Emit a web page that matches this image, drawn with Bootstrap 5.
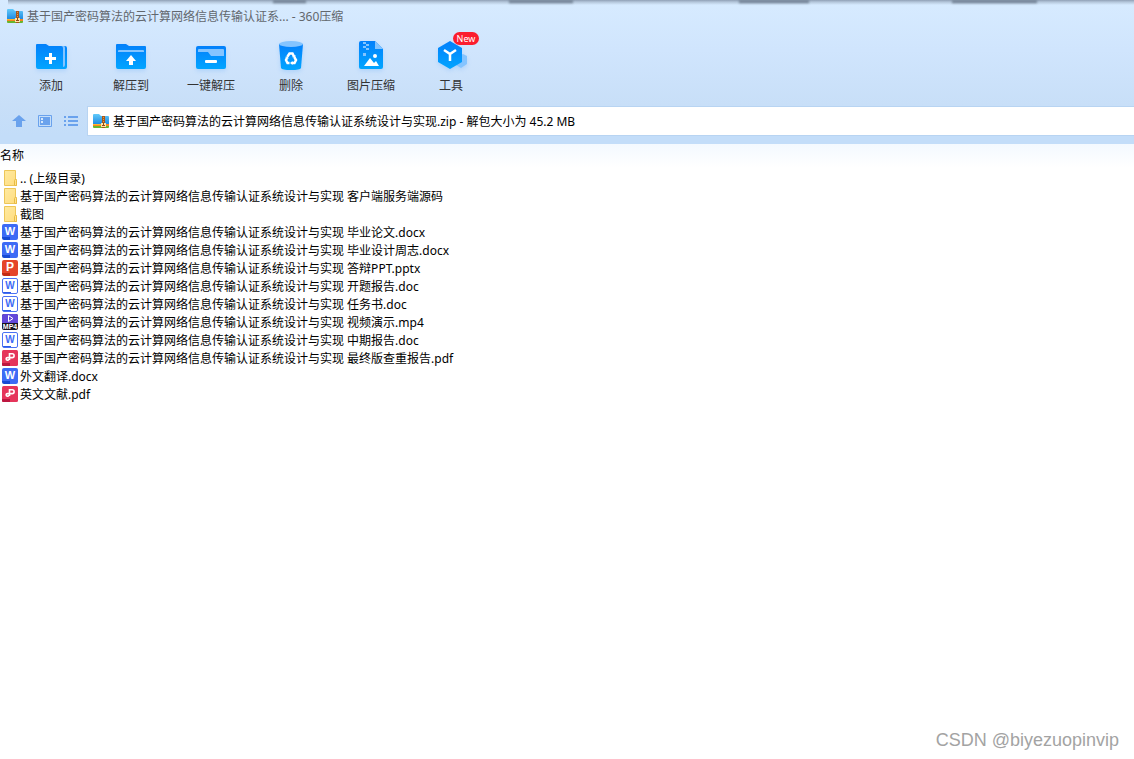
<!DOCTYPE html>
<html lang="zh-CN">
<head>
<meta charset="utf-8">
<meta name="viewport" content="width=device-width, initial-scale=1">
<title>360压缩</title>
<link href="https://cdn.jsdelivr.net/npm/bootstrap@5.3.0/dist/css/bootstrap.min.css" rel="stylesheet">
<style>
  body { font-family: "Noto Sans", "Noto Sans CJK SC", sans-serif; font-size: 12px; line-height: 18px; color: #000; background: #fff; }
  .app-head { background: linear-gradient(#d7ebff 0, #d0e5fd 50px, #c8dff8 104px, #c3ddf9 136px, #c3ddf9 100%); }
  .top-shade { left: 8px; right: 0; top: 0; height: 5px; background: linear-gradient(#8fa0b5, #b4c6da 40%, transparent); }
  .top-shade i { position: absolute; top: 0; height: 4px; background: linear-gradient(#708093 50%, transparent); filter: blur(1px); }
  .title-bar { height: 32px; padding-left: 7px; gap: 4px; color: #62676d; }
  .title-bar span { padding-top: 2px; }
  .tool-bar { padding-left: 11px; height: 74px; }
  .tool { width: 80px; border: 0; background: none; color: #333; padding: 7px 0 0; }
  .tool svg { display: block; margin: 0 auto 2px; filter: drop-shadow(0 2px 2px #3d95f533); }
  .new-tag { left: 42px; top: 0; width: 26px; height: 13px; border-radius: 7px; background: #fb1d2e; color: #fff; font-size: 9px; line-height: 13px; }
  .path-row { padding: 0 0 8px 12px; }
  .mini { border: 0; padding: 0; background: none; width: 14px; height: 14px; }
  .mini svg { display: block; }
  .nav-set { width: 75px; gap: 12px; }
  .path-box { border: 1px solid #b8d4f2; border-right: 0; background: #fff; height: 30px; padding-left: 5px; gap: 4px; }
  .path-box input { border: 0; padding: 0; outline: 0; background: none; color: #000; height: 20px; }
  .list-zone { background: linear-gradient(#f3f9ff, #fff 24px); }
  .files { border-collapse: collapse; width: 100%; }
  .files th { font-weight: 400; height: 26px; padding: 0 0 3px; }
  .files td { padding: 0 0 0 2px; height: 18px; }
  .files a { color: #000; text-decoration: none; gap: 2px; height: 18px; }
  .files a > svg, .ficon { flex: none; width: 16px; height: 16px; margin-bottom: 2px; }
  .ficon { border-radius: 2px; overflow: hidden; color: #fff; text-align: center; font: bold 11px/14px "Liberation Sans", sans-serif; background: linear-gradient(var(--dark), var(--dark)) 0 100% / 8px 3px no-repeat var(--base); }
  .f-docx { --base: #3d6bf5; --dark: #174ad4; }
  .f-pptx { --base: #e5452a; --dark: #c22a13; font-size: 12px; }
  .f-doc { --base: #fff; --dark: #2a5be8; color: #3d6bf5; border: 1px solid #4a72f4; background-size: 8px 1px; font-size: 10px; }
  .f-mp4 { background: #17121f; font-size: 7px; line-height: 7px; }
  .f-mp4 svg { display: block; }
  .wm { right: 15px; bottom: 7px; font: 18px/24px "Liberation Sans", sans-serif; color: #a3a3a3; }
</style>
</head>
<body class="min-vh-100 position-relative">
<svg width="0" height="0" class="position-absolute" aria-hidden="true">
  <defs>
    <linearGradient id="blue" x1="0" y1="0" x2="0" y2="1"><stop offset="0" stop-color="#0380fb"/><stop offset="1" stop-color="#02a5ff"/></linearGradient>
    <linearGradient id="sky" x1="0" y1="0" x2="0" y2="1"><stop offset="0" stop-color="#62cafa"/><stop offset="1" stop-color="#1e8be2"/></linearGradient>
    <linearGradient id="fold" x1="0" y1="0" x2="1" y2="1"><stop offset="0" stop-color="#ffeaa0"/><stop offset="1" stop-color="#ffdc7e"/></linearGradient>
  </defs>
  <symbol id="zip" viewBox="0 0 16 14">
    <path fill="url(#sky)" d="M0 1q0-1 1-1h5l2 2h7q1 0 1 1v7H0z"/>
    <path fill="#f6851f" d="M0 10h16v2H0z"/><path fill="#ffb52d" d="M0 10h8v1H0z"/><path fill="#67b52e" d="M0 12h16v1q0 1-1 1H1q-1 0-1-1z"/>
    <path fill="#a8561a" d="M9 2h3v12H9z"/><path fill="#dd9a4a" d="M10 3h1v1h-1zm0 2h1v1h-1zm0 2h1v1h-1z"/>
    <path fill="#ffe3a6" d="M8 9h5v4H8z"/><path fill="#8d4b16" d="M10 9h1v2h-1zM9 11h3v1H9z"/>
  </symbol>
  <symbol id="dir" viewBox="0 0 16 16">
    <path fill="url(#fold)" stroke="#edc658" d="M2.500.5h11v9h1v6h-12z"/><path fill="#ffe28c" stroke="#e8bb45" d="M12.500 10.500q0-1 1-1t1 1v5h-2z"/>
  </symbol>
  <symbol id="pdf" viewBox="0 0 16 16">
    <rect width="16" height="16" rx="1.500" fill="#e5355b"/><path fill="#bd1740" d="M0 13h8v3H1.500Q0 16 0 14.500z"/>
    <path fill="none" stroke="#fff" stroke-width="1.600" d="M7.500 10V3.800h2.700a1.900 1.900 0 0 1 0 3.800H5.400a1.300 1.300 0 1 0 1.300 1.600"/>
  </symbol>
  <symbol id="play" viewBox="0 0 16 9">
    <path fill="#6247d9" d="M0 0h16v9H0z"/><path fill="none" stroke="#fff" d="M6.500 1.500v6L11 4.500z"/>
  </symbol>
</svg>

<header class="app-head position-relative">
  <div class="top-shade position-absolute" aria-hidden="true">
    <i style="left:23.5%;width:3%"></i><i style="left:44.5%;width:5.7%"></i><i style="left:64.9%;width:6.2%"></i><i style="left:83.800%;width:7.6%"></i>
  </div>
  <div class="title-bar d-flex align-items-center">
    <svg width="16" height="14" aria-hidden="true"><use href="#zip"/></svg>
    <span>基于国产密码算法的云计算网络信息传输认证系... - 360压缩</span>
  </div>

  <nav class="tool-bar d-flex align-items-start" aria-label="工具栏">
    <button type="button" class="tool">
      <svg width="34" height="36" viewBox="0 0 34 36"><path fill="url(#blue)" d="M2 6q0-1 1-1h9l3 2h16q2 0 2 2v19q0 2-2 2H4q-2 0-2-2z"/><path fill="#84c4ff" d="M27 7h3q1 0 1 2v17q0 2-2 2V9q0-2-2-2z"/><path fill="#fff" d="M15 14h3v4h4v3h-4v4h-3v-4h-4v-3h4z"/></svg>
      添加</button>
    <button type="button" class="tool">
      <svg width="34" height="36" viewBox="0 0 34 36"><path fill="url(#blue)" d="M2 6q0-1 1-1h9l3 2h16q1 0 1 1v20q0 2-2 2H4q-2 0-2-2z"/><path fill="#84c4ff" d="M4 13v-1q0-1 1-1h24q1 0 1 1v1z"/><path fill="#fff" d="m17 16 5 6h-3v4h-4v-4h-3z"/></svg>
      解压到</button>
    <button type="button" class="tool">
      <svg width="34" height="36" viewBox="0 0 34 36"><rect x="2" y="7" width="30" height="23" rx="2" fill="url(#blue)"/><path fill="#84c4ff" d="M4 13v-2q0-1 1-1h24q1 0 1 1v6H17l-3-4z"/><rect x="11" y="21" width="12" height="3" rx="1" fill="#fff"/></svg>
      一键解压</button>
    <button type="button" class="tool">
      <svg width="34" height="36" viewBox="0 0 34 36"><path fill="url(#blue)" d="M5 5h24l-2 24q-1 2-10 2T7 29z"/><ellipse cx="17" cy="5" rx="12" ry="3" fill="#84c4ff"/><g fill="none" stroke="#fff" stroke-width="2.500"><path d="m13.500 17.500 2-3h3l1.500 3"/><path d="m20.500 18.500 1.500 2.500-1.500 3H18"/><path d="M15.500 24h-2L12 21l1-2"/></g><path fill="#fff" d="m18 18 3.500-2v3.500zm.5 4v4L16 24zM11 18l3-1 .5 3z"/></svg>
      删除</button>
    <button type="button" class="tool">
      <svg width="34" height="36" viewBox="0 0 34 36"><path fill="url(#blue)" d="M5 4q0-2 2-2h14l8 8v18q0 2-2 2H7q-2 0-2-2z"/><path fill="#84c4ff" d="m21 2 8 8h-8zM9 3h3v2h3v2h-3v2h3v2h-3v-2H9V7h3V5H9zm0 11h3v3H9z"/><path fill="#fff" d="m10 27 6-8 4 5 2-2 3 5z"/><circle cx="21" cy="17" r="2" fill="#fff"/></svg>
      图片压缩</button>
    <button type="button" class="tool position-relative">
      <svg width="34" height="36" viewBox="0 0 34 36"><path fill="#84c4ff" d="m25 17 4-2 4 2v8l-6 4-5-3z"/><path fill="url(#blue)" d="m16 2 12 7v14l-12 7-12-7V9z"/><path fill="none" stroke="#fff" stroke-width="2.500" d="m10 11 6 4 6-4m-6 4v7"/></svg>
      工具<span class="new-tag position-absolute">New</span></button>
  </nav>

  <div class="path-row d-flex align-items-center">
    <div class="nav-set d-flex flex-shrink-0">
      <button type="button" class="mini" aria-label="上级目录"><svg width="14" height="14"><path fill="#6aa2ed" d="m7 1 7 6h-4v6H4V7H0z"/></svg></button>
      <button type="button" class="mini" aria-label="预览"><svg width="14" height="14"><path fill="none" stroke="#6aa2ed" d="M.5 1.500h13v11H.5z"/><path fill="#6aa2ed" d="M2 3h10v8H2z"/><path fill="#d3e7fd" d="M3 4h2v2H3zm0 3h2v2H3z"/></svg></button>
      <button type="button" class="mini" aria-label="列表"><svg width="14" height="14"><path fill="#6aa2ed" d="M0 2h2v2H0zm4 0h10v2H4zM0 6h2v2H0zm4 0h10v2H4zm-4 4h2v2H0zm4 0h10v2H4z"/></svg></button>
    </div>
    <label class="path-box d-flex align-items-center flex-grow-1">
      <svg width="16" height="14" role="img" aria-label="压缩包"><use href="#zip"/></svg>
      <input type="text" class="flex-grow-1" value="基于国产密码算法的云计算网络信息传输认证系统设计与实现.zip - 解包大小为 45.2 MB">
    </label>
  </div>
</header>

<main class="list-zone">
  <table class="files">
    <thead><tr><th scope="col">名称</th></tr></thead>
    <tbody>
      <tr><td><a href="#" class="d-flex align-items-center"><svg><use href="#dir"/></svg>.. (上级目录)</a></td></tr>
      <tr><td><a href="#" class="d-flex align-items-center"><svg><use href="#dir"/></svg>基于国产密码算法的云计算网络信息传输认证系统设计与实现 客户端服务端源码</a></td></tr>
      <tr><td><a href="#" class="d-flex align-items-center"><svg><use href="#dir"/></svg>截图</a></td></tr>
      <tr><td><a href="#" class="d-flex align-items-center"><span class="ficon f-docx">W</span>基于国产密码算法的云计算网络信息传输认证系统设计与实现 毕业论文.docx</a></td></tr>
      <tr><td><a href="#" class="d-flex align-items-center"><span class="ficon f-docx">W</span>基于国产密码算法的云计算网络信息传输认证系统设计与实现 毕业设计周志.docx</a></td></tr>
      <tr><td><a href="#" class="d-flex align-items-center"><span class="ficon f-pptx">P</span>基于国产密码算法的云计算网络信息传输认证系统设计与实现 答辩PPT.pptx</a></td></tr>
      <tr><td><a href="#" class="d-flex align-items-center"><span class="ficon f-doc">W</span>基于国产密码算法的云计算网络信息传输认证系统设计与实现 开题报告.doc</a></td></tr>
      <tr><td><a href="#" class="d-flex align-items-center"><span class="ficon f-doc">W</span>基于国产密码算法的云计算网络信息传输认证系统设计与实现 任务书.doc</a></td></tr>
      <tr><td><a href="#" class="d-flex align-items-center"><span class="ficon f-mp4"><svg width="16" height="9"><use href="#play"/></svg>MP4</span>基于国产密码算法的云计算网络信息传输认证系统设计与实现 视频演示.mp4</a></td></tr>
      <tr><td><a href="#" class="d-flex align-items-center"><span class="ficon f-doc">W</span>基于国产密码算法的云计算网络信息传输认证系统设计与实现 中期报告.doc</a></td></tr>
      <tr><td><a href="#" class="d-flex align-items-center"><svg><use href="#pdf"/></svg>基于国产密码算法的云计算网络信息传输认证系统设计与实现 最终版查重报告.pdf</a></td></tr>
      <tr><td><a href="#" class="d-flex align-items-center"><span class="ficon f-docx">W</span>外文翻译.docx</a></td></tr>
      <tr><td><a href="#" class="d-flex align-items-center"><svg><use href="#pdf"/></svg>英文文献.pdf</a></td></tr>
    </tbody>
  </table>
</main>
<div class="wm position-absolute">CSDN @biyezuopinvip</div>
<script src="https://cdn.jsdelivr.net/npm/bootstrap@5.3.0/dist/js/bootstrap.bundle.min.js"></script>
</body>
</html>
